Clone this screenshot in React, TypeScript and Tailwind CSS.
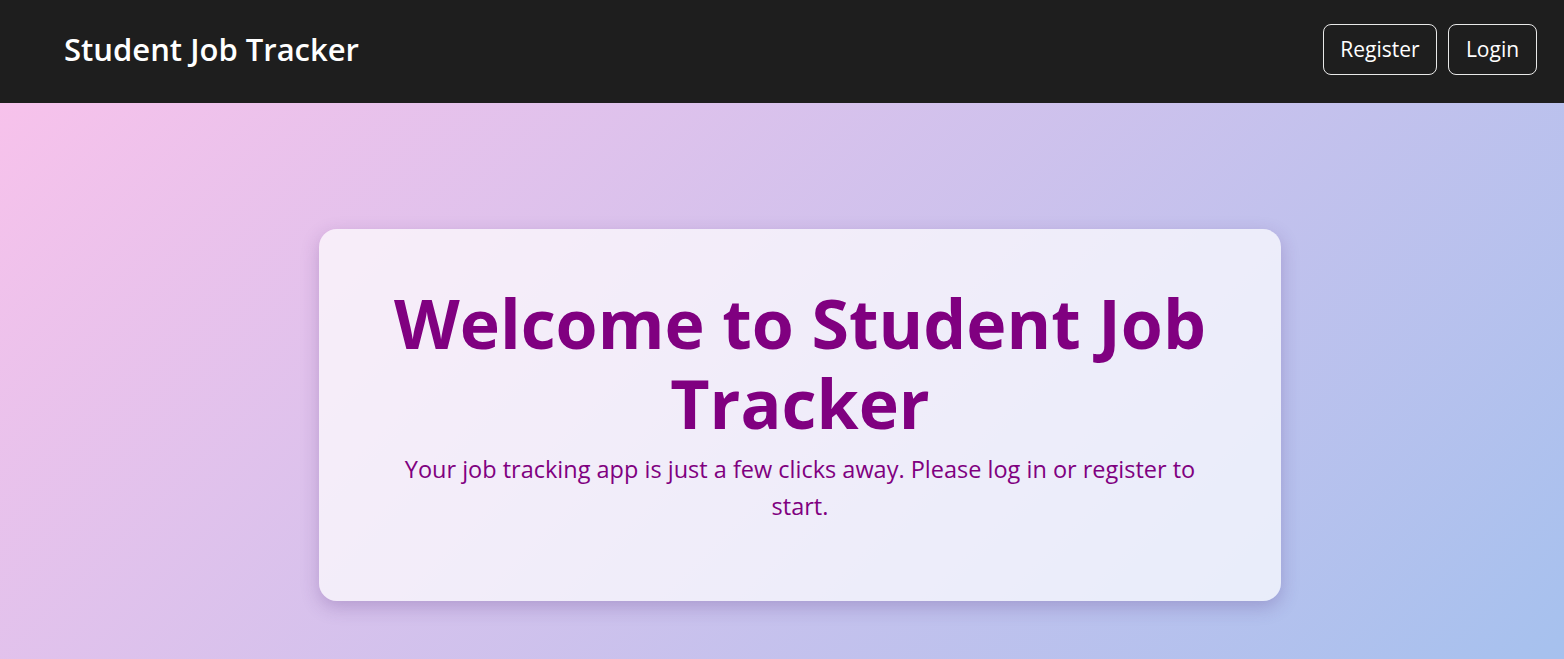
export default function App() {
  return (
    <div className="min-h-screen flex flex-col font-['Open_Sans','Noto_Sans',sans-serif] bg-[linear-gradient(135deg,#fbc2eb_0%,#a6c1ee_100%)]">
      {/* Top bar */}
      <header className="h-[103px] bg-[#1e1e1e] flex items-center justify-between pl-16 pr-[27px] pb-1">
        <h1 className="text-[31px] font-semibold text-white">Student Job Tracker</h1>
        <nav className="flex gap-[11px]">
          <button className="h-[51px] w-[114px] rounded-lg border border-white/90 text-white text-[21px]">
            Register
          </button>
          <button className="h-[51px] w-[89px] rounded-lg border border-white/90 text-white text-[21px]">
            Login
          </button>
        </nav>
      </header>

      {/* Hero card */}
      <main className="flex-1 flex justify-center pl-[36px] pt-[126px] pb-[58px]">
        <div className="w-[962px] h-[372px] rounded-[18px] bg-white/70 shadow-[0_6px_18px_rgba(80,40,120,0.25)] px-[60px] pt-[54px] text-center text-[#800080]">
          <h2 className="text-[68px] leading-[80px] font-bold">
            Welcome to Student Job Tracker
          </h2>
          <p className="mt-[8px] text-[23.5px] leading-[37px]">
            Your job tracking app is just a few clicks away. Please log in or register to start.
          </p>
        </div>
      </main>
    </div>
  );
}
